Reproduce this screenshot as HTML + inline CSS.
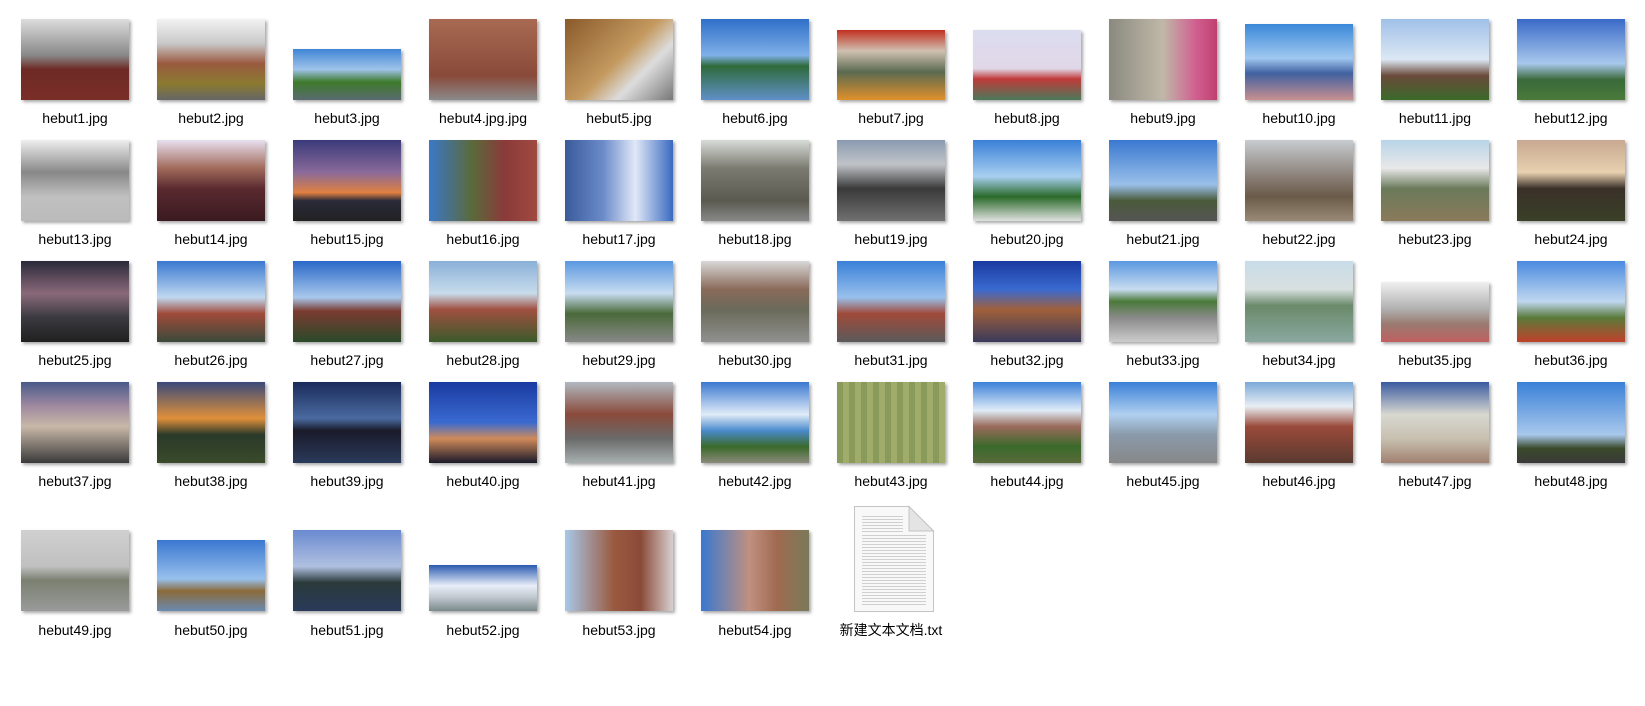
<!DOCTYPE html>
<html><head><meta charset="utf-8"><style>
body{margin:0;width:1645px;height:706px;background:#fff;position:relative;overflow:hidden;font-family:"Liberation Sans","Noto Sans CJK SC",sans-serif;}
.t{position:absolute;width:108px;box-shadow:2px 2px 3px rgba(0,0,0,.35);}
.l{position:absolute;width:136px;text-align:center;font-size:14px;color:#000;line-height:18px;white-space:nowrap;}
</style></head><body>
<!-- row 1 (bottom 100) -->
<div class="t" style="left:21px;top:19px;height:81px;background:linear-gradient(#ddd,#888 45%,#6e2a25 62%,#7a2e28)"></div>
<div class="t" style="left:157px;top:19px;height:81px;background:linear-gradient(#f2f2f2,#c9c9c9 30%,#9a5a40 55%,#8a7a30 80%,#666)"></div>
<div class="t" style="left:293px;top:49px;height:51px;background:linear-gradient(#3f86d6,#9fc3ea 40%,#3d7a2a 65%,#5a6a70)"></div>
<div class="t" style="left:429px;top:19px;height:81px;background:linear-gradient(#a86a52,#8a4a3a 70%,#8a8a8a)"></div>
<div class="t" style="left:565px;top:19px;height:81px;background:linear-gradient(135deg,#8a5a2a,#c49a60 50%,#ddd 70%,#777)"></div>
<div class="t" style="left:701px;top:19px;height:81px;background:linear-gradient(#2f6fc8,#7fb0e8 45%,#2f6a3a 58%,#5f90c8)"></div>
<div class="t" style="left:837px;top:30px;height:70px;background:linear-gradient(#c03020,#d0c0b0 30%,#5a6a50 60%,#e0902a)"></div>
<div class="t" style="left:973px;top:30px;height:70px;background:linear-gradient(#dcdcf0,#e0d8e8 55%,#c03a3a 70%,#4a7a5a)"></div>
<div class="t" style="left:1109px;top:19px;height:81px;background:linear-gradient(90deg,#8a8a80,#c0b8a8 50%,#d06090 80%,#c04070)"></div>
<div class="t" style="left:1245px;top:24px;height:76px;background:linear-gradient(#3a88d8,#a0c8f0 45%,#4060a0 65%,#c89090)"></div>
<div class="t" style="left:1381px;top:19px;height:81px;background:linear-gradient(#a0c0e8,#dce8f4 50%,#6a4a3a 70%,#3a6a2a)"></div>
<div class="t" style="left:1517px;top:19px;height:81px;background:linear-gradient(#3a6ac8,#a8c8ec 55%,#3a6a3a 75%,#4a7a3a)"></div>
<div class="l" style="left:7px;top:109px">hebut1.jpg</div>
<div class="l" style="left:143px;top:109px">hebut2.jpg</div>
<div class="l" style="left:279px;top:109px">hebut3.jpg</div>
<div class="l" style="left:415px;top:109px">hebut4.jpg.jpg</div>
<div class="l" style="left:551px;top:109px">hebut5.jpg</div>
<div class="l" style="left:687px;top:109px">hebut6.jpg</div>
<div class="l" style="left:823px;top:109px">hebut7.jpg</div>
<div class="l" style="left:959px;top:109px">hebut8.jpg</div>
<div class="l" style="left:1095px;top:109px">hebut9.jpg</div>
<div class="l" style="left:1231px;top:109px">hebut10.jpg</div>
<div class="l" style="left:1367px;top:109px">hebut11.jpg</div>
<div class="l" style="left:1503px;top:109px">hebut12.jpg</div>
<!-- row 2 (bottom 221) -->
<div class="t" style="left:21px;top:140px;height:81px;background:linear-gradient(#eee,#888 40%,#c0c0c0 70%,#bbb)"></div>
<div class="t" style="left:157px;top:140px;height:81px;background:linear-gradient(#e8e0f0,#a06a5a 35%,#5a2a30 60%,#3a1a20)"></div>
<div class="t" style="left:293px;top:140px;height:81px;background:linear-gradient(#3a3a7a,#8a6a9a 40%,#e08040 65%,#2a2a3a 75%,#222)"></div>
<div class="t" style="left:429px;top:140px;height:81px;background:linear-gradient(90deg,#3a78c8,#5a6a3a 40%,#8a3a3a 70%,#a04a40)"></div>
<div class="t" style="left:565px;top:140px;height:81px;background:linear-gradient(90deg,#3a5a9a,#6a8ac8 35%,#e0e8f8 65%,#3a6ac0)"></div>
<div class="t" style="left:701px;top:140px;height:81px;background:linear-gradient(#d8dcd8,#7a7a70 35%,#5a5a50 75%,#888)"></div>
<div class="t" style="left:837px;top:140px;height:81px;background:linear-gradient(#8a9ab0,#c0c4c8 30%,#3a3a3a 60%,#707070)"></div>
<div class="t" style="left:973px;top:140px;height:81px;background:linear-gradient(#3a80d8,#a8cff0 45%,#2a6a2a 70%,#e0e0e0)"></div>
<div class="t" style="left:1109px;top:140px;height:81px;background:linear-gradient(#3a78d0,#9ac0ea 55%,#4a5a3a 75%,#555)"></div>
<div class="t" style="left:1245px;top:140px;height:81px;background:linear-gradient(#c8ccd0,#8a8078 45%,#6a5a48 70%,#9a8a78)"></div>
<div class="t" style="left:1381px;top:140px;height:81px;background:linear-gradient(#b8d4e8,#e8e8e8 35%,#6a7a5a 60%,#8a7a5a)"></div>
<div class="t" style="left:1517px;top:140px;height:81px;background:linear-gradient(#c8a890,#e8d0b0 40%,#3a3028 60%,#3a4028)"></div>
<div class="l" style="left:7px;top:230px">hebut13.jpg</div>
<div class="l" style="left:143px;top:230px">hebut14.jpg</div>
<div class="l" style="left:279px;top:230px">hebut15.jpg</div>
<div class="l" style="left:415px;top:230px">hebut16.jpg</div>
<div class="l" style="left:551px;top:230px">hebut17.jpg</div>
<div class="l" style="left:687px;top:230px">hebut18.jpg</div>
<div class="l" style="left:823px;top:230px">hebut19.jpg</div>
<div class="l" style="left:959px;top:230px">hebut20.jpg</div>
<div class="l" style="left:1095px;top:230px">hebut21.jpg</div>
<div class="l" style="left:1231px;top:230px">hebut22.jpg</div>
<div class="l" style="left:1367px;top:230px">hebut23.jpg</div>
<div class="l" style="left:1503px;top:230px">hebut24.jpg</div>
<!-- row 3 (bottom 342) -->
<div class="t" style="left:21px;top:261px;height:81px;background:linear-gradient(#2a2a3a,#8a6a7a 40%,#3a3a40 70%,#202020)"></div>
<div class="t" style="left:157px;top:261px;height:81px;background:linear-gradient(#3a78d0,#c0d8f0 45%,#a04a3a 65%,#3a4a3a)"></div>
<div class="t" style="left:293px;top:261px;height:81px;background:linear-gradient(#2a68c8,#a8c8ec 45%,#7a3a30 62%,#2a4a2a)"></div>
<div class="t" style="left:429px;top:261px;height:81px;background:linear-gradient(#8ab0d8,#c8dcec 40%,#a05040 60%,#3a5a2a)"></div>
<div class="t" style="left:565px;top:261px;height:81px;background:linear-gradient(#5a98e0,#c8dcf0 40%,#4a6a3a 65%,#888)"></div>
<div class="t" style="left:701px;top:261px;height:81px;background:linear-gradient(#d8d8d8,#8a6a5a 35%,#6a6a5a 60%,#909090)"></div>
<div class="t" style="left:837px;top:261px;height:81px;background:linear-gradient(#3a80d8,#98c0ec 45%,#a04a3a 65%,#5a5a5a)"></div>
<div class="t" style="left:973px;top:261px;height:81px;background:linear-gradient(#1a3aa0,#3a6ad0 35%,#a0603a 60%,#3a3a5a)"></div>
<div class="t" style="left:1109px;top:261px;height:81px;background:linear-gradient(#5a98e0,#c8dcf0 35%,#4a7a3a 50%,#8a8a8a 70%,#ccc)"></div>
<div class="t" style="left:1245px;top:261px;height:81px;background:linear-gradient(#c8dce8,#d8e0e0 35%,#6a8a6a 55%,#8aa8a0)"></div>
<div class="t" style="left:1381px;top:282px;height:60px;background:linear-gradient(#f0f0f0,#b0b0b0 45%,#9a7a70 70%,#c06060)"></div>
<div class="t" style="left:1517px;top:261px;height:81px;background:linear-gradient(#4a8ae0,#c0d8f0 50%,#5a7a3a 70%,#c0402a)"></div>
<div class="l" style="left:7px;top:351px">hebut25.jpg</div>
<div class="l" style="left:143px;top:351px">hebut26.jpg</div>
<div class="l" style="left:279px;top:351px">hebut27.jpg</div>
<div class="l" style="left:415px;top:351px">hebut28.jpg</div>
<div class="l" style="left:551px;top:351px">hebut29.jpg</div>
<div class="l" style="left:687px;top:351px">hebut30.jpg</div>
<div class="l" style="left:823px;top:351px">hebut31.jpg</div>
<div class="l" style="left:959px;top:351px">hebut32.jpg</div>
<div class="l" style="left:1095px;top:351px">hebut33.jpg</div>
<div class="l" style="left:1231px;top:351px">hebut34.jpg</div>
<div class="l" style="left:1367px;top:351px">hebut35.jpg</div>
<div class="l" style="left:1503px;top:351px">hebut36.jpg</div>
<!-- row 4 (bottom 463) -->
<div class="t" style="left:21px;top:382px;height:81px;background:linear-gradient(#4a5a8a,#a08aa0 30%,#c8b8a8 55%,#3a3a3a)"></div>
<div class="t" style="left:157px;top:382px;height:81px;background:linear-gradient(#3a4a7a,#e0903a 45%,#2a3a2a 65%,#3a4a2a)"></div>
<div class="t" style="left:293px;top:382px;height:81px;background:linear-gradient(#1a2a5a,#4a6aa0 45%,#1a1a2a 60%,#2a3a5a)"></div>
<div class="t" style="left:429px;top:382px;height:81px;background:linear-gradient(#1a3aa0,#3a6ad0 50%,#d08a5a 70%,#1a1a2a)"></div>
<div class="t" style="left:565px;top:382px;height:81px;background:linear-gradient(#b0b8c0,#8a4a3a 40%,#6a6a6a 70%,#a8b0b0)"></div>
<div class="t" style="left:701px;top:382px;height:81px;background:linear-gradient(#3a78d0,#e0ecf8 40%,#4a8acc 60%,#3a6a2a 80%,#8a8a7a)"></div>
<div class="t" style="left:837px;top:382px;height:81px;background:repeating-linear-gradient(90deg,#8a9a5a 0 6px,#a0ac6a 6px 12px)"></div>
<div class="t" style="left:973px;top:382px;height:81px;background:linear-gradient(#3a80d8,#e0ecf8 35%,#9a6a5a 55%,#3a6a2a 80%,#5a6a3a)"></div>
<div class="t" style="left:1109px;top:382px;height:81px;background:linear-gradient(#3a80d8,#b0d0f0 40%,#8a9aaa 65%,#888)"></div>
<div class="t" style="left:1245px;top:382px;height:81px;background:linear-gradient(#7aa8d8,#e8eef4 30%,#9a4a3a 55%,#5a3a30)"></div>
<div class="t" style="left:1381px;top:382px;height:81px;background:linear-gradient(#3a5aa0,#d8d8d0 40%,#c8c0b0 70%,#a08070)"></div>
<div class="t" style="left:1517px;top:382px;height:81px;background:linear-gradient(#3a80d8,#a8c8ec 65%,#3a4a2a 82%,#3a3a3a)"></div>
<div class="l" style="left:7px;top:472px">hebut37.jpg</div>
<div class="l" style="left:143px;top:472px">hebut38.jpg</div>
<div class="l" style="left:279px;top:472px">hebut39.jpg</div>
<div class="l" style="left:415px;top:472px">hebut40.jpg</div>
<div class="l" style="left:551px;top:472px">hebut41.jpg</div>
<div class="l" style="left:687px;top:472px">hebut42.jpg</div>
<div class="l" style="left:823px;top:472px">hebut43.jpg</div>
<div class="l" style="left:959px;top:472px">hebut44.jpg</div>
<div class="l" style="left:1095px;top:472px">hebut45.jpg</div>
<div class="l" style="left:1231px;top:472px">hebut46.jpg</div>
<div class="l" style="left:1367px;top:472px">hebut47.jpg</div>
<div class="l" style="left:1503px;top:472px">hebut48.jpg</div>
<!-- row 5 (bottom 611) -->
<div class="t" style="left:21px;top:530px;height:81px;background:linear-gradient(#d0d0d0,#c0c0c0 45%,#7a8070 62%,#9a9a9a)"></div>
<div class="t" style="left:157px;top:540px;height:71px;background:linear-gradient(#3a78d0,#98c0ec 55%,#8a6a3a 72%,#6a8ab0)"></div>
<div class="t" style="left:293px;top:530px;height:81px;background:linear-gradient(#6a8ad0,#b0c0e0 45%,#2a3a3a 65%,#2a3a5a)"></div>
<div class="t" style="left:429px;top:565px;height:46px;background:linear-gradient(#2a5ab0,#e8eef8 45%,#c0c8d0 70%,#7a8a8a)"></div>
<div class="t" style="left:565px;top:530px;height:81px;background:linear-gradient(90deg,#a8c8e8,#9a5a40 45%,#8a4a38 70%,#d8d0d0)"></div>
<div class="t" style="left:701px;top:530px;height:81px;background:linear-gradient(90deg,#3a78d0,#c09080 45%,#a06a50 70%,#7a7a5a)"></div>
<div class="l" style="left:7px;top:621px">hebut49.jpg</div>
<div class="l" style="left:143px;top:621px">hebut50.jpg</div>
<div class="l" style="left:279px;top:621px">hebut51.jpg</div>
<div class="l" style="left:415px;top:621px">hebut52.jpg</div>
<div class="l" style="left:551px;top:621px">hebut53.jpg</div>
<div class="l" style="left:687px;top:621px">hebut54.jpg</div>
<svg style="position:absolute;left:853px;top:505px" width="82" height="108" viewBox="0 0 82 108">
<path d="M1.5 1.5 H56 L80.5 26 V106.5 H1.5 Z" fill="#f8f8f8" stroke="#c4c4c4"/>
<path d="M56 1.5 V26 H80.5 Z" fill="#e4e4e4" stroke="#c4c4c4"/>
<g stroke="#cfcfcf" stroke-width="1">
<line x1="9" y1="11.5" x2="50" y2="11.5"/><line x1="9" y1="14.5" x2="50" y2="14.5"/><line x1="9" y1="17.5" x2="50" y2="17.5"/><line x1="9" y1="20.5" x2="50" y2="20.5"/><line x1="9" y1="23.5" x2="50" y2="23.5"/><line x1="9" y1="26.5" x2="50" y2="26.5"/>
<line x1="9" y1="30.5" x2="73" y2="30.5"/><line x1="9" y1="33.5" x2="73" y2="33.5"/><line x1="9" y1="36.5" x2="73" y2="36.5"/><line x1="9" y1="39.5" x2="73" y2="39.5"/><line x1="9" y1="42.5" x2="73" y2="42.5"/><line x1="9" y1="45.5" x2="73" y2="45.5"/><line x1="9" y1="48.5" x2="73" y2="48.5"/><line x1="9" y1="51.5" x2="73" y2="51.5"/><line x1="9" y1="54.5" x2="73" y2="54.5"/><line x1="9" y1="57.5" x2="73" y2="57.5"/><line x1="9" y1="60.5" x2="73" y2="60.5"/><line x1="9" y1="63.5" x2="73" y2="63.5"/><line x1="9" y1="66.5" x2="73" y2="66.5"/><line x1="9" y1="69.5" x2="73" y2="69.5"/><line x1="9" y1="72.5" x2="73" y2="72.5"/><line x1="9" y1="75.5" x2="73" y2="75.5"/><line x1="9" y1="78.5" x2="73" y2="78.5"/><line x1="9" y1="81.5" x2="73" y2="81.5"/><line x1="9" y1="84.5" x2="73" y2="84.5"/><line x1="9" y1="87.5" x2="73" y2="87.5"/><line x1="9" y1="90.5" x2="73" y2="90.5"/><line x1="9" y1="93.5" x2="73" y2="93.5"/><line x1="9" y1="96.5" x2="73" y2="96.5"/><line x1="9" y1="99.5" x2="73" y2="99.5"/>
</g></svg>
<div class="l" style="left:823px;top:621px">新建文本文档.txt</div>
</body></html>
